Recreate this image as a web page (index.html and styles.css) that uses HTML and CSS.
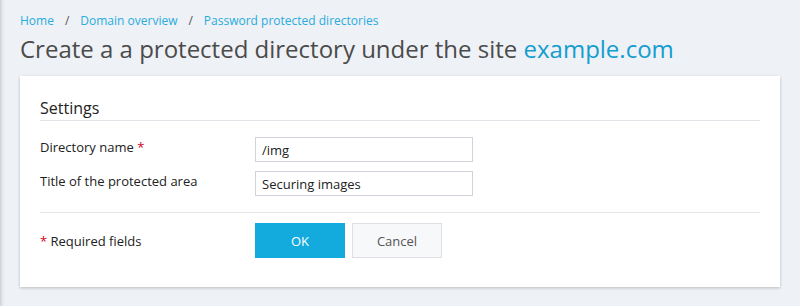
FILE: index.html
```html
<!DOCTYPE html>
<html>
<head>
<meta charset="utf-8">
<link rel="stylesheet" href="styles.css">
</head>
<body>
<div class="page">
  <nav class="breadcrumbs">
    <a href="#">Home</a><span class="sep">/</span><a href="#">Domain overview</a><span class="sep">/</span><a href="#">Password protected directories</a>
  </nav>
  <h1 class="title">Create a a protected directory under the site <a href="#">example.com</a></h1>
  <div class="card">
    <h2 class="section-title">Settings</h2>
    <div class="form-row first">
      <label class="label">Directory name <span class="req">*</span></label>
      <input class="input" type="text" value="/img">
    </div>
    <div class="form-row">
      <label class="label">Title of the protected area</label>
      <input class="input" type="text" value="Securing images">
    </div>
    <div class="form-footer">
      <div class="label"><span class="req">*</span> Required fields</div>
      <div class="buttons">
        <button class="btn btn-primary">OK</button>
        <button class="btn btn-default">Cancel</button>
      </div>
    </div>
  </div>
</div>
</body>
</html>
```
FILE: styles.css
```css
html, body {
  margin: 0;
  padding: 0;
}
body {
  font-family: "Open Sans", "Noto Sans", sans-serif;
  background: linear-gradient(to right, #cdd0d4 0, #e2e5e9 2px, #eef1f5 5px) #eef1f5;
  height: 306px;
  overflow: hidden;
  color: #222;
}
.page {
  padding: 13px 20px 0 20px;
}
.breadcrumbs {
  font-size: 12px;
  line-height: 16px;
  height: 16px;
}
.breadcrumbs a {
  color: #27acdf;
  text-decoration: none;
}
.breadcrumbs .sep {
  color: #555;
  margin: 0 11px;
}
.title {
  margin: 4px 0 0 0;
  font-size: 24px;
  font-weight: 400;
  line-height: 32px;
  color: #4b4b4b;
}
.title a {
  color: #149dd0;
  text-decoration: none;
}
.card {
  margin-top: 11px;
  background: #fff;
  box-shadow: 0 1px 3px rgba(0, 0, 0, 0.22);
  padding: 20px 20px 28px 20px;
  height: 163px;
}
.section-title {
  margin: 0;
  font-size: 16px;
  font-weight: 400;
  line-height: 24px;
  padding-bottom: 0;
  border-bottom: 1px solid #e0e3e8;
  color: #222;
}
.form-row {
  display: flex;
  align-items: center;
  margin-top: 9px;
}
.form-row.first {
  margin-top: 16px;
}
.label {
  width: 215px;
  font-size: 13px;
  line-height: 18px;
  color: #222;
  flex: none;
}
.form-row .label {
  align-self: flex-start;
  margin-top: 1px;
}
.req {
  color: #d0021b;
}
.input {
  box-sizing: border-box;
  width: 218px;
  height: 25px;
  border: 1px solid #cfd3da;
  padding: 0 6px;
  font-family: "Open Sans", "Noto Sans", sans-serif;
  font-size: 13px;
  color: #222;
  outline: none;
  margin: 0;
}
.form-footer {
  display: flex;
  align-items: center;
  margin-top: 16px;
  border-top: 1px solid #e3e5e8;
  padding-top: 10px;
}
.buttons {
  display: flex;
  gap: 7px;
}
.btn {
  box-sizing: border-box;
  width: 90px;
  height: 35px;
  font-family: "Open Sans", "Noto Sans", sans-serif;
  font-size: 13px;
  border: 1px solid transparent;
  margin: 0;
  padding: 0;
}
.btn-primary {
  background: #13aadd;
  color: #fff;
  border-color: #13aadd;
}
.btn-default {
  background: #f7f8fa;
  color: #555;
  border-color: #dde1e6;
}
```
